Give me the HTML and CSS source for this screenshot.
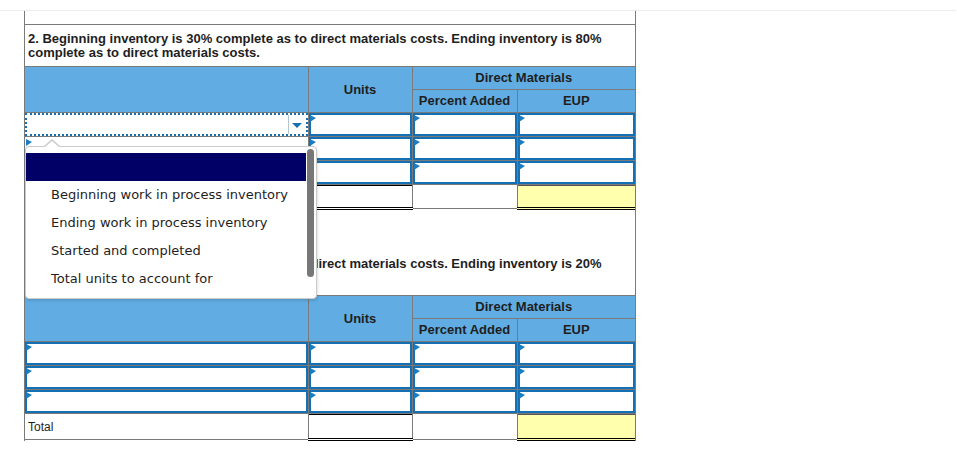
FILE: index.html
```html
<!DOCTYPE html>
<html>
<head>
<meta charset="utf-8">
<link rel="stylesheet" href="styles.css">
</head>
<body>
<div class="topbar"></div>
<div class="panel">
  <div class="lead"></div>
  <div class="q">2. Beginning inventory is 30% complete as to direct materials costs. Ending inventory is 80% complete as to direct materials costs.</div>
  <table class="grid">
    <colgroup><col class="c1"><col class="c2"><col class="c3"><col class="c4"></colgroup>
    <thead>
      <tr><th rowspan="2"></th><th rowspan="2">Units</th><th colspan="2">Direct Materials</th></tr>
      <tr><th>Percent Added</th><th>EUP</th></tr>
    </thead>
    <tbody>
      <tr>
        <td><div class="sel"><span class="sel-btn"><span class="caret"></span></span></div></td>
        <td><div class="inp"></div></td><td><div class="inp"></div></td><td><div class="inp"></div></td>
      </tr>
      <tr>
        <td><div class="inp inp--bare"></div></td>
        <td><div class="inp"></div></td><td><div class="inp"></div></td><td><div class="inp"></div></td>
      </tr>
      <tr>
        <td><div class="inp"></div></td>
        <td><div class="inp"></div></td><td><div class="inp"></div></td><td><div class="inp"></div></td>
      </tr>
      <tr class="total">
        <td class="lbl">Total</td><td class="sum"></td><td class="plain"></td><td class="sum sum--eup"></td>
      </tr>
    </tbody>
  </table>
  <div class="spacer"></div>
  <div class="q q--second">3. Beginning inventory is 40% complete as to direct materials costs. Ending inventory is 20% complete as to direct materials costs.</div>
  <table class="grid">
    <colgroup><col class="c1"><col class="c2"><col class="c3"><col class="c4"></colgroup>
    <thead>
      <tr><th rowspan="2"></th><th rowspan="2">Units</th><th colspan="2">Direct Materials</th></tr>
      <tr><th>Percent Added</th><th>EUP</th></tr>
    </thead>
    <tbody>
      <tr>
        <td><div class="inp"></div></td>
        <td><div class="inp"></div></td><td><div class="inp"></div></td><td><div class="inp"></div></td>
      </tr>
      <tr>
        <td><div class="inp"></div></td>
        <td><div class="inp"></div></td><td><div class="inp"></div></td><td><div class="inp"></div></td>
      </tr>
      <tr>
        <td><div class="inp"></div></td>
        <td><div class="inp"></div></td><td><div class="inp"></div></td><td><div class="inp"></div></td>
      </tr>
      <tr class="total total--last">
        <td class="lbl">Total</td><td class="sum"></td><td class="plain"></td><td class="sum sum--eup"></td>
      </tr>
    </tbody>
  </table>
</div>

<div class="popup">
  <ul class="opts">
    <li class="opt opt--active"></li>
    <li class="opt">Beginning work in process inventory</li>
    <li class="opt">Ending work in process inventory</li>
    <li class="opt">Started and completed</li>
    <li class="opt">Total units to account for</li>
  </ul>
  <div class="thumb"></div>
</div>
</body>
</html>
```

FILE: styles.css
```css
* { box-sizing: border-box; }
html, body { margin: 0; padding: 0; background: #fff; }
body {
  font-family: "Liberation Sans", Arial, sans-serif;
  color: #1e1e1e;
  width: 957px;
  height: 449px;
  overflow: hidden;
  position: relative;
}

.topbar {
  width: 956px;
  height: 11px;
  border-bottom: 1px solid #ececec;
}

.panel {
  margin-left: 24px;
  width: 612px;
  border-left: 1px solid #7a7a7a;
  border-right: 1px solid #7a7a7a;
}

.lead {
  height: 14px;
  border-bottom: 1px solid #7a7a7a;
}

.q {
  font-size: 13px;
  font-weight: bold;
  line-height: 14px;
  padding: 7px 4px 6px 3px;
}
.q--second {
  padding: 10px 4px 10px 3px;
}

.grid {
  width: 610px;
  table-layout: fixed;
  border-collapse: collapse;
  border-left: hidden;
  border-right: hidden;
}
.c1 { width: 283px; }
.c2 { width: 104px; }
.c3 { width: 105px; }
.c4 { width: 118px; }

.grid th,
.grid td {
  border: 1px solid #7a7a7a;
  padding: 0;
}
.grid th {
  background: #61ade3;
  font-size: 13px;
  font-weight: bold;
  line-height: 22px;
  height: 23px;
  text-align: center;
  color: #1e1e1e;
}

.inp {
  position: relative;
  height: 23px;
  border: 2px solid #1570b3;
  background: #fff;
}
.inp::before,
.inp--bare::before {
  content: "";
  position: absolute;
  left: -1px;
  top: 0;
  border-left: 6px solid #1a7cc2;
  border-top: 3px solid transparent;
  border-bottom: 4px solid transparent;
}
.inp--bare {
  border-color: transparent;
}

.sel {
  height: 23px;
  border: 2px dotted #1570b3;
  display: flex;
  justify-content: flex-end;
}
.sel-btn {
  width: 18px;
  border-left: 1px solid #b5c4cf;
  display: flex;
  align-items: center;
  justify-content: center;
}
.caret {
  width: 0;
  height: 0;
  border-left: 5px solid transparent;
  border-right: 5px solid transparent;
  border-top: 5px solid #1570b3;
  margin-top: 1px;
}

.total td { height: 24px; }
.total--last td { height: 26px; }
.total .lbl {
  font-size: 12px;
  padding-left: 3px;
  padding-top: 1px;
  vertical-align: middle;
}
.total .sum {
  border-bottom: 3px double #000;
  box-shadow: inset 0 1px 0 #000;
}
.total .sum--eup {
  background: #ffffae;
  box-shadow: inset 0 1px 0 #555;
}

.spacer {
  height: 37px;
}

/* dropdown list overlay */
.popup {
  position: absolute;
  left: 25px;
  top: 146px;
  width: 292px;
  height: 153px;
  background: #fff;
  border: 1px solid #cbcbcb;
  border-radius: 4px;
  box-shadow: 1px 2px 3px rgba(0, 0, 0, 0.12);
  font-family: "DejaVu Sans", Verdana, sans-serif;
  font-size: 13px;
  color: #1e1e1e;
}
.popup::before {
  content: "";
  position: absolute;
  left: 18px;
  top: -8px;
  border-left: 8px solid transparent;
  border-right: 8px solid transparent;
  border-bottom: 7px solid #cbcbcb;
}
.popup::after {
  content: "";
  position: absolute;
  left: 19px;
  top: -6px;
  border-left: 7px solid transparent;
  border-right: 7px solid transparent;
  border-bottom: 6px solid #fff;
}
.opts {
  list-style: none;
  margin: 0;
  padding: 6px 0 0 0;
  width: 280px;
}
.opt {
  height: 28px;
  line-height: 28px;
  padding-left: 25px;
  white-space: nowrap;
}
.opt--active {
  background: #000066;
}
.thumb {
  position: absolute;
  left: 281px;
  top: 2px;
  width: 7px;
  height: 128px;
  border-radius: 4px;
  background: #777;
}
```
